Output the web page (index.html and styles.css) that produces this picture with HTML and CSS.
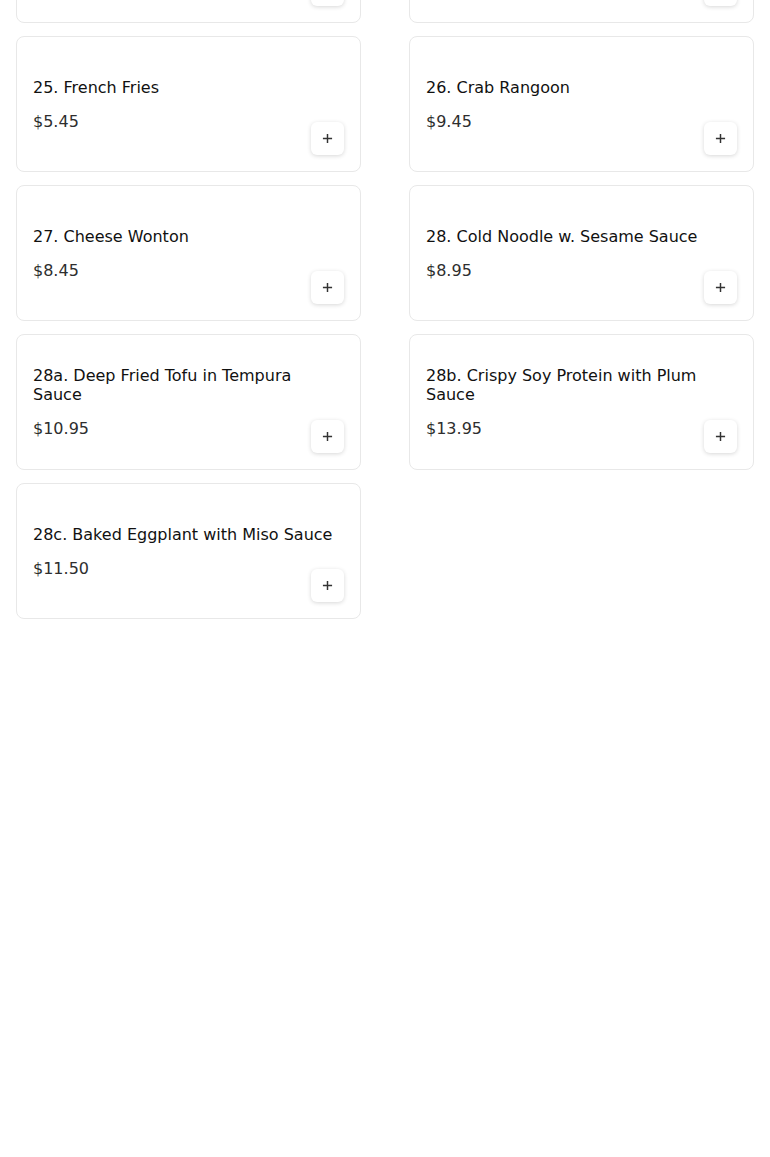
FILE: index.html
```html
<!DOCTYPE html>
<html lang="en">
<head>
    <meta charset="UTF-8">
    <meta name="viewport" content="width=device-width, initial-scale=1.0">
    <title>Appetizers</title>
    <link rel="stylesheet" href="styles.css">
</head>
<body>

    <div class="menu-list">
        <div class="menu-item">
            <div class="item-info">
                <div class="item-name">23. Egg Roll</div>
                <div class="item-price">$2.25</div>
            </div>
            <button class="add-btn" type="button" aria-label="Add"><svg viewBox="0 0 12 12"><path d="M6 1v10M1 6h10"/></svg></button>
        </div>
        <div class="menu-item">
            <div class="item-info">
                <div class="item-name">24. Spring Roll</div>
                <div class="item-price">$2.25</div>
            </div>
            <button class="add-btn" type="button" aria-label="Add"><svg viewBox="0 0 12 12"><path d="M6 1v10M1 6h10"/></svg></button>
        </div>
        <div class="menu-item">
            <div class="item-info">
                <div class="item-name">25. French Fries</div>
                <div class="item-price">$5.45</div>
            </div>
            <button class="add-btn" type="button" aria-label="Add"><svg viewBox="0 0 12 12"><path d="M6 1v10M1 6h10"/></svg></button>
        </div>
        <div class="menu-item">
            <div class="item-info">
                <div class="item-name">26. Crab Rangoon</div>
                <div class="item-price">$9.45</div>
            </div>
            <button class="add-btn" type="button" aria-label="Add"><svg viewBox="0 0 12 12"><path d="M6 1v10M1 6h10"/></svg></button>
        </div>
        <div class="menu-item">
            <div class="item-info">
                <div class="item-name">27. Cheese Wonton</div>
                <div class="item-price">$8.45</div>
            </div>
            <button class="add-btn" type="button" aria-label="Add"><svg viewBox="0 0 12 12"><path d="M6 1v10M1 6h10"/></svg></button>
        </div>
        <div class="menu-item">
            <div class="item-info">
                <div class="item-name">28. Cold Noodle w. Sesame Sauce</div>
                <div class="item-price">$8.95</div>
            </div>
            <button class="add-btn" type="button" aria-label="Add"><svg viewBox="0 0 12 12"><path d="M6 1v10M1 6h10"/></svg></button>
        </div>
        <div class="menu-item">
            <div class="item-info">
                <div class="item-name">28a. Deep Fried Tofu in Tempura Sauce</div>
                <div class="item-price">$10.95</div>
            </div>
            <button class="add-btn" type="button" aria-label="Add"><svg viewBox="0 0 12 12"><path d="M6 1v10M1 6h10"/></svg></button>
        </div>
        <div class="menu-item">
            <div class="item-info">
                <div class="item-name">28b. Crispy Soy Protein with Plum Sauce</div>
                <div class="item-price">$13.95</div>
            </div>
            <button class="add-btn" type="button" aria-label="Add"><svg viewBox="0 0 12 12"><path d="M6 1v10M1 6h10"/></svg></button>
        </div>
        <div class="menu-item">
            <div class="item-info">
                <div class="item-name">28c. Baked Eggplant with Miso Sauce</div>
                <div class="item-price">$11.50</div>
            </div>
            <button class="add-btn" type="button" aria-label="Add"><svg viewBox="0 0 12 12"><path d="M6 1v10M1 6h10"/></svg></button>
        </div>
    </div>

</body>
</html>
```
FILE: styles.css
```css
body {
    margin: 0;
    font-family: "DejaVu Sans", sans-serif;
    background-color: #fff;
    color: #111;
}
/* list is scrolled: first row sits above the top edge */
.menu-list {
    display: grid;
    grid-template-columns: 1fr 1fr;
    column-gap: 48px;
    row-gap: 13px;
    padding: 0 16px;
    margin-top: -113px;
}
.menu-item {
    display: grid;
    min-height: 136px;
    box-sizing: border-box;
    padding: 16px;
    border: 1px solid #e8e8e8;
    border-radius: 8px;
    background-color: #fff;
}
.item-info,
.add-btn {
    grid-area: 1 / 1;
}
.item-info {
    align-self: center;
    padding-top: 2px;
}
.item-name {
    font-size: 16px;
    line-height: 19px;
    font-weight: 500;
}
.item-price {
    margin-top: 14px;
    font-size: 16px;
    line-height: 22px;
    color: #2e2e2e;
}
.add-btn {
    justify-self: end;
    align-self: end;
    width: 33px;
    height: 33px;
    padding: 0;
    display: flex;
    align-items: center;
    justify-content: center;
    background-color: #fff;
    border: none;
    border-radius: 6px;
    box-shadow: 0px 1px 4px rgba(0, 0, 0, 0.16);
    cursor: pointer;
}
.add-btn svg {
    width: 11px;
    height: 11px;
    fill: none;
    stroke: #333;
    stroke-width: 1.6;
}
```
